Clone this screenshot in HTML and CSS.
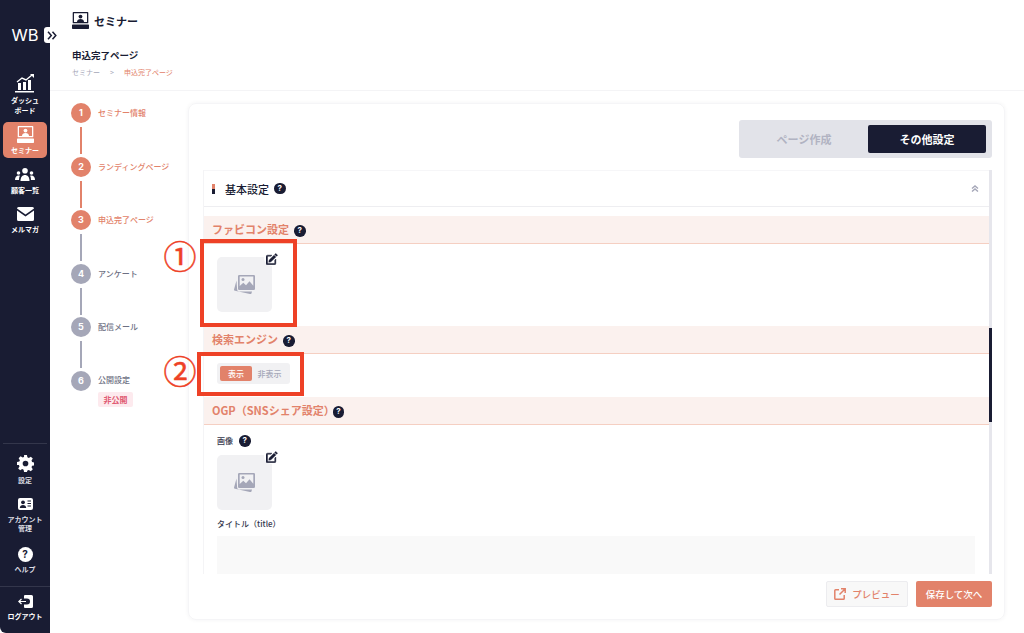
FILE: index.html
```html
<!DOCTYPE html>
<html lang="ja">
<head>
  <meta charset="UTF-8" />
  <meta name="viewport" content="width=device-width, initial-scale=1.0"/>
  <title>申込完了ページ</title>
  <link rel="stylesheet" href="styles.css">
</head>
<body>
  <svg class="sprites" width="0" height="0">
    <symbol id="i-seminar" viewBox="0 0 24 24" preserveAspectRatio="none">
      <path fill-rule="evenodd" d="M2 0h20a1 1 0 0 1 1 1v14a1 1 0 0 1-1 1H2a1 1 0 0 1-1-1V1a1 1 0 0 1 1-1zm.8 1.800v12.400h18.400V1.800z"/>
      <circle cx="12" cy="6.500" r="2.700"/>
      <path d="M7 14.200c0-3 2.200-4.400 5-4.400s5 1.400 5 4.400z"/>
      <rect x="0" y="17.500" width="24" height="6.500" rx="1"/>
    </symbol>
    <symbol id="i-image" viewBox="0 0 21 20">
      <path d="M2.500 5.500l.6 8.800a2.200 2.200 0 0 0 2.200 2.200H18l-.5 1.700a1.200 1.200 0 0 1-1.500.8L1 15.700a1.200 1.200 0 0 1-.9-1.500z"/>
      <path fill-rule="evenodd" d="M5.200 0h14.600A1.200 1.200 0 0 1 21 1.200v12.600a1.200 1.200 0 0 1-1.200 1.200H5.200A1.200 1.200 0 0 1 4 13.800V1.200A1.200 1.200 0 0 1 5.200 0zm.5 1.600v9.400l3.600-3.200 2.700 2.400 3.500-4 3.800 4.600V1.600z"/>
      <circle cx="9" cy="4.500" r="1.500"/>
    </symbol>
    <symbol id="i-edit" viewBox="0 0 14 14">
      <path d="M11.400.5l2.100 2.100-1.300 1.300-2.100-2.100zM9.400 2.500l2.100 2.100-5.700 5.700-2.600.5.500-2.600z"/>
      <path d="M1.800 2.500H7L5.700 3.800H2.300a.6.6 0 0 0-.5.500v7.400c0 .3.200.5.500.5h7.400c.3 0 .5-.2.500-.5V8.300l1.300-1.300v5a1.800 1.800 0 0 1-1.800 1.800H1.800A1.800 1.800 0 0 1 0 12V4.300a1.800 1.800 0 0 1 1.800-1.800z"/>
    </symbol>
  </svg>

  <div class="app">
    <!-- Sidebar -->
    <nav class="sidebar">
      <div class="logo">WB</div>
      <div class="expand">
        <svg width="10" height="9" viewBox="0 0 10 9"><path d="M1 .8l3.300 3.700L1 8.200M5.500 .8l3.300 3.700-3.300 3.700" fill="none" stroke="#191c33" stroke-width="1.500"/></svg>
      </div>

      <a class="nav-item nav-dash">
        <svg width="20" height="19" viewBox="0 0 20 19" fill="#fff">
          <path d="M2 8l5-4 4 2 6-5" fill="none" stroke="#fff" stroke-width="1.400"/>
          <path d="M15 0h4v4z"/>
          <rect x="3" y="9" width="3" height="7"/><rect x="8" y="8" width="3" height="8"/><rect x="13" y="6" width="3" height="10"/>
          <rect x="0" y="17" width="19" height="1.500"/>
        </svg>
        <span>ダッシュ<br>ボード</span>
      </a>
      <a class="nav-item nav-active">
        <svg width="17" height="17" fill="#fff"><use href="#i-seminar"/></svg>
        <span>セミナー</span>
      </a>
      <a class="nav-item nav-users">
        <svg width="20" height="13" viewBox="0 0 20 13" fill="#fff">
          <circle cx="10" cy="2.800" r="2.800"/><path d="M5.500 13c0-4 2-6 4.500-6s4.500 2 4.500 6z"/>
          <circle cx="3.500" cy="5" r="1.800"/><path d="M0 12c0-3 1.500-4.500 3.500-4.500 .6 0 1 .1 1.400.3-.6 1-.9 2.400-.9 4.200z"/>
          <circle cx="16.500" cy="5" r="1.800"/><path d="M20 12c0-3-1.500-4.500-3.500-4.500-.6 0-1 .1-1.400.3 .6 1 .9 2.400 .9 4.200z"/>
        </svg>
        <span>顧客一覧</span>
      </a>
      <a class="nav-item nav-mail">
        <svg width="17" height="14" viewBox="0 0 17 14" fill="#fff">
          <path d="M1.500 0h14A1.500 1.500 0 0 1 17 1.500L8.500 7.500 0 1.500A1.500 1.500 0 0 1 1.500 0z"/>
          <path d="M0 3.500l8.500 6 8.500-6v9A1.500 1.500 0 0 1 15.500 14h-14A1.500 1.500 0 0 1 0 12.500z"/>
        </svg>
        <span>メルマガ</span>
      </a>

      <div class="nav-bottom">
        <a class="nav-item nav-gear">
          <svg width="17" height="17" viewBox="0 0 24 24" fill="#fff"><path fill-rule="evenodd" d="M10 0h4l.7 3.300 2 .8 2.800-1.800 2.800 2.800-1.800 2.800.8 2 3.300.7v4l-3.300.7-.8 2 1.800 2.800-2.800 2.800-2.800-1.800-2 .8L14 24h-4l-.7-3.300-2-.8-2.800 1.800-2.800-2.800 1.800-2.800-.8-2L0 14v-4l3.300-.7.8-2-1.800-2.800 2.800-2.800 2.800 1.800 2-.8zM12 8a4 4 0 1 0 0 8 4 4 0 0 0 0-8z"/></svg>
          <span>設定</span>
        </a>
        <a class="nav-item nav-account">
          <svg width="15" height="12" viewBox="0 0 15 12"><rect width="15" height="12" rx="2" fill="#fff"/><circle cx="5" cy="4.300" r="1.900" fill="#191c33"/><path d="M1.800 10c0-2 1.400-3 3.200-3s3.200 1 3.200 3z" fill="#191c33"/><path d="M9.500 3h3.500M9.500 5.500h3.500M9.500 8h3.500" stroke="#191c33"/></svg>
          <span>アカウント<br>管理</span>
        </a>
        <a class="nav-item nav-help">
          <span class="help-round">?</span>
          <span>ヘルプ</span>
        </a>
        <a class="nav-item nav-logout">
          <svg width="15" height="13" viewBox="0 0 15 13" fill="#fff">
            <path d="M7 0h6.500A1.500 1.500 0 0 1 15 1.500v10a1.500 1.500 0 0 1-1.500 1.500H7a1 1 0 0 1-1-1V9.500h3a1 1 0 0 0 0-6H6V1a1 1 0 0 1 1-1z"/>
            <path d="M3.500 4L.8 6.500 3.500 9M1 6.500h7" fill="none" stroke="#fff" stroke-width="1.200"/>
          </svg>
          <span>ログアウト</span>
        </a>
      </div>
    </nav>

    <div class="main">
      <header class="page-head">
        <div class="page-title">
          <svg width="17" height="17" fill="#191c33"><use href="#i-seminar"/></svg>
          <span>セミナー</span>
        </div>
        <h1>申込完了ページ</h1>
        <p class="crumbs"><span>セミナー</span><i>&gt;</i><b>申込完了ページ</b></p>
      </header>

      <div class="content">
        <!-- Steps -->
        <ol class="steps">
          <li class="step done"><span class="num">1</span><span class="step-name">セミナー情報</span></li>
          <li class="step done"><span class="num">2</span><span class="step-name">ランディングページ</span></li>
          <li class="step done line-gray"><span class="num">3</span><span class="step-name">申込完了ページ</span></li>
          <li class="step"><span class="num">4</span><span class="step-name">アンケート</span></li>
          <li class="step"><span class="num">5</span><span class="step-name">配信メール</span></li>
          <li class="step last">
            <span class="num">6</span>
            <div class="step-name">公開設定<span class="private">非公開</span></div>
          </li>
        </ol>

        <section class="card">
          <div class="tabs-wrap">
            <div class="tabs">
              <span class="tab">ページ作成</span>
              <span class="tab tab-on">その他設定</span>
            </div>
          </div>

          <div class="panel">
            <div class="panel-body">
              <div class="accordion-head">
                <span class="mark"></span>
                <span class="accordion-title">基本設定</span>
                <span class="help">?</span>
                <svg class="chevrons" width="8" height="7" viewBox="0 0 8 7"><path d="M1 3.500L4 1l3 2.500M1 6.500L4 4l3 2.500" fill="none" stroke="#a5a7b8" stroke-width="1.400"/></svg>
              </div>

              <h2 class="band band-first">ファビコン設定<span class="help">?</span></h2>
              <div class="block block-fav">
                <div class="thumb">
                  <svg width="21" height="20" fill="#a5a7b8"><use href="#i-image"/></svg>
                  <span class="edit"><svg width="12" height="12" fill="#191c33"><use href="#i-edit"/></svg></span>
                </div>
              </div>

              <h2 class="band">検索エンジン<span class="help">?</span></h2>
              <div class="block block-search">
                <div class="toggle"><span class="toggle-on">表示</span><span class="toggle-off">非表示</span></div>
              </div>

              <h2 class="band">OGP（SNSシェア設定）<span class="help help-tight">?</span></h2>
              <div class="block block-ogp">
                <div class="field-label">画像<span class="help">?</span></div>
                <div class="thumb">
                  <svg width="21" height="20" fill="#a5a7b8"><use href="#i-image"/></svg>
                  <span class="edit"><svg width="12" height="12" fill="#191c33"><use href="#i-edit"/></svg></span>
                </div>
                <div class="field-label field-title">タイトル（title）</div>
                <div class="text-box"></div>
              </div>
            </div>
            <div class="scrollbar"><div class="thumb-bar"></div></div>
          </div>

          <div class="actions">
            <button class="btn-preview">
              <svg width="12" height="12" viewBox="0 0 12 12" fill="none" stroke="#e2826a" stroke-width="1.500"><path d="M5 1.800H1.600a.8.800 0 0 0-.8.800v7.800c0 .4.400.8.800.8h7.800c.4 0 .8-.4.800-.8V7M7 .8h4.200V5M11 1L5.500 6.500"/></svg>
              プレビュー
            </button>
            <button class="btn-save">保存して次へ</button>
          </div>
        </section>
      </div>
    </div>
  </div>

  <!-- Annotations drawn over the screenshot -->
  <div class="note note-1"></div>
  <div class="note note-2"></div>
  <span class="note-num num-1">①</span>
  <span class="note-num num-2">②</span>
</body>
</html>
```

FILE: styles.css
```css
* {
  box-sizing: border-box;
}
body {
  margin: 0;
  height: 633px;
  overflow: hidden;
  background: #fff;
  color: #191c33;
  font-family: "Noto Sans CJK JP", "Noto Sans", sans-serif;
}
.sprites {
  display: block;
  height: 0;
}
.app {
  display: flex;
  height: 633px;
}

/* Sidebar */
.sidebar {
  position: relative;
  width: 50px;
  flex: none;
  display: flex;
  flex-direction: column;
  align-items: center;
  background: #191c33;
  border-radius: 0 0 0 6px;
}
.logo {
  margin-top: 24px;
  height: 22px;
  color: #fff;
  font-family: "Inter", sans-serif;
  font-size: 16.500px;
  font-weight: 400;
  line-height: 22px;
}
.expand {
  position: absolute;
  left: 44px;
  top: 27px;
  width: 16px;
  height: 16px;
  display: flex;
  align-items: center;
  justify-content: center;
  background: #fff;
  border-radius: 3px;
}
.nav-item {
  display: flex;
  flex-direction: column;
  align-items: center;
  color: #fff;
  font-size: 7px;
  font-weight: 700;
  line-height: 9.500px;
  text-align: center;
  width: 44px;
}
.nav-item span {
  display: block;
}
.nav-dash {
  margin-top: 28px;
}
.nav-dash span {
  margin-top: 3px;
}
.nav-active {
  margin-top: 7px;
  height: 36px;
  padding-top: 4px;
  background: #e2826a;
  border-radius: 5px;
}
.nav-active span {
  margin-top: 3px;
}
.nav-users {
  margin-top: 10px;
}
.nav-users span {
  margin-top: 5px;
}
.nav-mail {
  margin-top: 11px;
}
.nav-mail span {
  margin-top: 4px;
}
.nav-bottom {
  margin-top: auto;
  width: 100%;
  display: flex;
  flex-direction: column;
  align-items: center;
}
.nav-gear,
.nav-account,
.nav-help {
  color: #dcdce2;
}
.nav-gear {
  padding-top: 11px;
  border-top: 1px solid #33364b;
}
.nav-gear span {
  margin-top: 4px;
}
.nav-account {
  margin-top: 12px;
}
.nav-account span {
  margin-top: 5px;
}
.nav-help {
  margin-top: 13px;
}
.help-round {
  width: 15px;
  height: 15px;
  background: #fff;
  border-radius: 50%;
  color: #191c33;
  font-family: "Inter", sans-serif;
  font-size: 10px;
  line-height: 15px;
}
.nav-help span:last-child {
  margin-top: 3px;
}
.nav-logout {
  width: 100%;
  margin-top: 12px;
  height: 47px;
  padding-top: 8px;
  border-top: 1px solid #33364b;
}
.nav-logout span {
  margin-top: 4px;
}

/* Page head */
.main {
  flex: 1;
  min-width: 0;
  display: flex;
  flex-direction: column;
}
.page-head {
  height: 91px;
  padding: 12px 0 0 22px;
  border-bottom: 1px solid #f4f4f6;
}
.page-title {
  display: flex;
  align-items: center;
  gap: 5px;
  height: 17px;
  font-size: 11px;
  font-weight: 700;
}
h1 {
  margin: 19px 0 0;
  font-size: 9.500px;
  font-weight: 700;
  line-height: 14px;
}
.crumbs {
  display: flex;
  margin: 5px 0 0;
  font-size: 7px;
  line-height: 10px;
  color: #a5a7b8;
}
.crumbs i {
  margin: 0 10px 0 10px;
  font-style: normal;
}
.crumbs b {
  font-weight: 400;
  color: #e2826a;
}

/* Steps */
.content {
  flex: 1;
  display: flex;
  min-height: 0;
  background: #fff;
}
.steps {
  width: 138px;
  flex: none;
  margin: 0;
  padding: 12px 0 0 21px;
  list-style: none;
}
.step {
  position: relative;
  display: flex;
  height: 53.600px;
  gap: 7px;
  color: #6d7083;
}
.step::after {
  content: "";
  position: absolute;
  left: 9px;
  top: 24px;
  width: 2px;
  height: 27px;
  background: #a5a7b8;
}
.step.done::after {
  background: #e2826a;
}
.step.line-gray::after {
  background: #a5a7b8;
}
.step.last::after {
  display: none;
}
.num {
  width: 20px;
  height: 20px;
  flex: none;
  background: #a5a7b8;
  border-radius: 50%;
  color: #fff;
  font-family: "Inter", sans-serif;
  font-size: 9px;
  font-weight: 700;
  line-height: 20px;
  text-align: center;
}
.step.done .num {
  background: #e2826a;
}
.step-name {
  font-size: 8px;
  font-weight: 500;
  line-height: 20px;
}
.step.done .step-name {
  color: #e2826a;
}
.step.last .step-name {
  margin-top: -1px;
}
.private {
  display: block;
  width: 35px;
  margin-top: 2px;
  background: #fdeaee;
  border-radius: 2px;
  color: #e05a72;
  font-size: 8px;
  font-weight: 700;
  line-height: 15px;
  text-align: center;
}

/* Card */
.card {
  width: 817px;
  height: 517px;
  margin-top: 12px;
  padding: 16px 12px 0 14px;
  border: 1px solid #f5f5f7;
  border-radius: 8px;
  box-shadow: 0 0 4px rgba(25, 28, 51, 0.05);
}
.tabs-wrap {
  display: flex;
  justify-content: flex-end;
  height: 38px;
}
.tabs {
  display: flex;
  width: 253px;
  padding: 5px 6px 5px 5px;
  background: #e2e3e9;
  border-radius: 3px;
}
.tab {
  flex: 1;
  padding-right: 4px;
  color: #b1b3c2;
  font-size: 11px;
  font-weight: 700;
  line-height: 28px;
  text-align: center;
}
.tab-on {
  flex: none;
  width: 118px;
  padding-right: 0;
  background: #191c33;
  border-radius: 2px;
  color: #fff;
}
.panel {
  display: flex;
  height: 404px;
  margin-top: 12px;
  overflow: hidden;
}
.panel-body {
  flex: 1;
  min-width: 0;
  overflow: hidden;
  border-left: 1px solid #f4f4f6;
}
.scrollbar {
  width: 3px;
  flex: none;
  background: #e6e6ec;
}
.thumb-bar {
  height: 94px;
  margin-top: 158px;
  background: #191c33;
}
.accordion-head {
  display: flex;
  align-items: center;
  height: 37px;
  padding: 0 10px 0 8px;
  border-top: 1px solid #f6f6f8;
  border-bottom: 1px solid #eeeef1;
}
.mark {
  width: 3px;
  height: 10px;
  margin-right: 10px;
  background: linear-gradient(#e2826a 50%, #191c33 50%);
}
.accordion-title {
  font-size: 11px;
  font-weight: 500;
}
.help {
  display: inline-block;
  width: 11.500px;
  height: 11.500px;
  margin-left: 5px;
  background: #191c33;
  border-radius: 50%;
  color: #fff;
  font-family: "Inter", sans-serif;
  font-size: 8px;
  font-weight: 700;
  line-height: 11.500px;
  text-align: center;
  vertical-align: 1px;
}
.help-tight {
  margin-left: -2px;
}
.chevrons {
  margin-left: auto;
}
.band {
  height: 28px;
  margin: 0;
  padding-left: 8px;
  background: #fbf1ee;
  border-bottom: 1px solid #f5cfc2;
  color: #e2826a;
  font-size: 11px;
  font-weight: 700;
  line-height: 27px;
}
.band-first {
  margin-top: 9px;
}
.block {
  padding-left: 13px;
}
.block-fav {
  height: 82px;
  padding-top: 13px;
}
.block-search {
  height: 43px;
  padding-top: 9px;
}
.block-ogp {
  padding-top: 9px;
}
.thumb {
  position: relative;
  display: flex;
  align-items: center;
  justify-content: center;
  width: 55px;
  height: 55px;
  background: #f1f1f3;
  border-radius: 5px;
}
.edit {
  position: absolute;
  right: -7px;
  top: -6px;
  width: 15px;
  height: 15px;
  display: flex;
  align-items: center;
  justify-content: center;
  background: #fff;
  border-radius: 50%;
}
.edit svg {
  stroke: #191c33;
  stroke-width: 0.5px;
}
.toggle {
  display: flex;
  width: 73px;
  height: 21px;
  padding: 3px;
  background: #f1f1f3;
  border-radius: 3px;
  font-size: 8px;
  font-weight: 500;
  line-height: 15px;
  text-align: center;
}
.toggle-on {
  width: 32px;
  background: #e2826a;
  border-radius: 2px;
  color: #fff;
}
.toggle-off {
  flex: 1;
  color: #a5a7b8;
}
.field-label {
  height: 16px;
  margin-bottom: 5px;
  font-size: 8px;
  font-weight: 500;
  line-height: 14px;
  color: #33364b;
}
.field-label .help {
  margin-left: 6px;
}
.field-title {
  height: 14px;
  margin: 7px 0 5px;
}
.text-box {
  width: 758px;
  height: 60px;
  background: #f9f9f9;
}

/* Footer buttons */
.actions {
  display: flex;
  justify-content: flex-end;
  gap: 8px;
  margin-top: 7px;
}
.actions button {
  height: 26px;
  padding: 0;
  border-radius: 2px;
  font-family: inherit;
  font-size: 9.500px;
  font-weight: 500;
  cursor: pointer;
}
.btn-preview {
  display: flex;
  align-items: center;
  justify-content: center;
  gap: 6px;
  width: 82px;
  background: #f8f8f8;
  border: 1px solid #ececef;
  color: #e2826a;
}
.btn-save {
  width: 76px;
  background: #e2826a;
  border: none;
  color: #fff;
}

/* Annotations */
.note {
  position: absolute;
  border: 4px solid #ee4126;
}
.note-1 {
  left: 200px;
  top: 239px;
  width: 97px;
  height: 88px;
}
.note-2 {
  left: 197px;
  top: 352px;
  width: 107px;
  height: 44px;
}
.note-num {
  position: absolute;
  left: 162px;
  width: 36px;
  color: #ee4126;
  font-size: 33px;
  font-weight: 400;
  line-height: 36px;
  text-align: center;
  -webkit-text-stroke: 0.5px #ee4126;
}
.num-1 {
  top: 237px;
}
.num-2 {
  top: 352px;
}
```
